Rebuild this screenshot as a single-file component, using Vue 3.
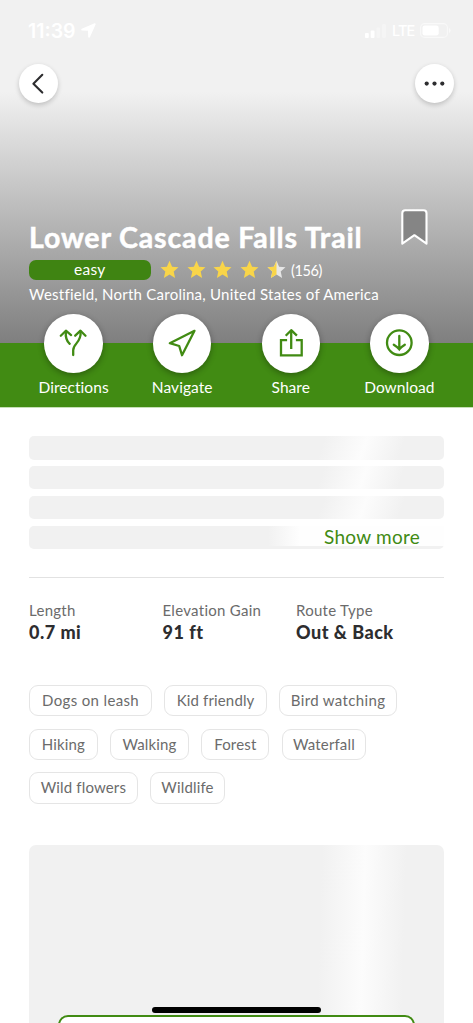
<script setup>
const actions = [
  { id: 'directions', label: 'Directions' },
  { id: 'navigate', label: 'Navigate' },
  { id: 'share', label: 'Share' },
  { id: 'download', label: 'Download' },
]
const stats = [
  { label: 'Length', value: '0.7 mi' },
  { label: 'Elevation Gain', value: '91 ft' },
  { label: 'Route Type', value: 'Out & Back' },
]
const tagRows = [
  [{ t: 'Dogs on leash', w: 123.2 }, { t: 'Kid friendly', w: 102.2 }, { t: 'Bird watching', w: 118.2 }],
  [{ t: 'Hiking', w: 68.8 }, { t: 'Walking', w: 78.8 }, { t: 'Forest', w: 68.3 }, { t: 'Waterfall', w: 84.3 }],
  [{ t: 'Wild flowers', w: 108.8 }, { t: 'Wildlife', w: 74.8 }],
]
const star = 'M9.5 .8 L12.1 6.7 L18.5 7.3 L13.7 11.6 L15.1 17.9 L9.5 14.6 L3.9 17.9 L5.3 11.6 L.5 7.3 L6.9 6.7 Z'
</script>

<template>
  <div class="screen">
    <header class="hero">
      <div class="status">
        <span class="time">11:39</span>
        <svg class="loc" width="15" height="15" viewBox="0 0 15 15"><path d="M13.6.3 .8 5.8C-.2 6.3 0 7.6 1.1 7.6L7 7.7 7.2 13.7c0 1.1 1.3 1.4 1.8.3L14.6 1.4c.3-.8-.3-1.4-1-1.1Z" fill="#fff" /></svg>
        <svg class="signal" width="21" height="14" viewBox="0 0 21 14" fill="#fff">
          <rect x="0" y="9" width="3.8" height="5" rx="1" /><rect x="5.7" y="6.5" width="3.8" height="7.5" rx="1" />
          <rect x="11.4" y="3.5" width="3.8" height="10.5" rx="1" opacity=".3" /><rect x="17.1" y="0" width="3.8" height="14" rx="1" opacity=".3" />
        </svg>
        <span class="lte">LTE</span>
        <svg class="battery" width="31" height="15" viewBox="0 0 31 15">
          <rect x=".6" y=".6" width="26.8" height="13.8" rx="4" fill="none" stroke="#fff" stroke-width="1.1" opacity=".55" />
          <rect x="2.5" y="2.4" width="16.2" height="10.2" rx="2.4" fill="#fff" /><path d="M29 5v5q1.6-.8 1.6-2.5T29 5Z" fill="#fff" opacity=".6" />
        </svg>
      </div>
      <nav class="nav">
        <button class="round"><svg width="39" height="39" viewBox="0 0 39 39"><path d="M23.3 10.8 14.4 19.7 23.3 28.6" fill="none" stroke="#2d2d2f" stroke-width="2.1" stroke-linecap="round" stroke-linejoin="round" /></svg></button>
        <button class="round"><svg width="39" height="39" viewBox="0 0 39 39" fill="#2d2d2f"><circle cx="11.7" cy="19.6" r="2.1" /><circle cx="19.5" cy="19.6" r="2.1" /><circle cx="27.3" cy="19.6" r="2.1" /></svg></button>
      </nav>
      <div class="headline">
        <h1>Lower Cascade Falls Trail</h1>
        <svg class="bookmark" width="27" height="37" viewBox="0 0 27 37"><path d="M1.3 34.7V4.2Q1.3 1.3 4.2 1.3H22.6Q25.5 1.3 25.5 4.2V34.7L13.4 26.2Z" fill="#858585" stroke="#fff" stroke-width="2.1" stroke-linejoin="round" /></svg>
      </div>
      <div class="rating">
        <span class="badge">easy</span>
        <div class="stars">
          <svg v-for="n in 5" :key="n" width="19" height="19" viewBox="0 0 19 19">
            <path :d="star" :fill="n === 5 ? '#e6e6e6' : '#f9d549'" />
            <path v-if="n === 5" d="M9.5 .8V14.6L3.9 17.9 5.3 11.6 .5 7.3 6.9 6.7Z" fill="#f9d549" />
          </svg>
        </div>
        <span class="count">(156)</span>
      </div>
      <p class="place">Westfield, North Carolina, United States of America</p>
    </header>

    <section class="actions">
      <div v-for="a in actions" :key="a.id" class="action">
        <span class="disc">
          <svg width="58" height="58" viewBox="0 0 58 58" fill="none" stroke="#418b13" stroke-width="2.3">
            <g v-if="a.id === 'directions'" stroke-linecap="round">
              <path d="M16.8 21.7 21.9 16.7 27.1 21.1M31.2 21.7 36.5 16.7 41.5 21.7" stroke-linejoin="round" />
              <path d="M21.9 17.5C21.3 23 22.5 27 25.7 29.8M36.5 17.5C37.8 28.5 29.2 29.2 29.2 36.2V41" />
            </g>
            <path v-else-if="a.id === 'navigate'" d="M41.5 16.8 16.8 29.2 26.2 32 29 41.2Z" stroke-linejoin="round" />
            <g v-else-if="a.id === 'share'"><path d="M25.1 26.1H19V41.4H39.7V26.1H33.9M29.2 35V16.2" /><path d="M23.7 21.7 29.2 16.2 34.9 21.7" stroke-linejoin="round" /></g>
            <g v-else><circle cx="29.3" cy="28.7" r="12.3" /><path d="M29.3 22V35M23.8 30.7Q27.5 33 29.3 35.3 31.1 33 34.8 30.7" stroke-linecap="round" /></g>
          </svg>
        </span>
        <span class="alabel">{{ a.label }}</span>
      </div>
    </section>

    <main>
      <div class="lines">
        <div class="line"></div><div class="line"></div><div class="line"></div>
        <div class="line last"><a class="more">Show more</a></div>
      </div>
      <hr />
      <dl class="stats">
        <div v-for="s in stats" :key="s.label"><dt>{{ s.label }}</dt><dd>{{ s.value }}</dd></div>
      </dl>
      <div class="tags">
        <div v-for="(row, i) in tagRows" :key="i" class="tagrow">
          <span v-for="tag in row" :key="tag.t" class="tag" :style="{ width: tag.w + 'px' }">{{ tag.t }}</span>
        </div>
      </div>
      <div class="map"><div class="cta"></div><div class="home"></div></div>
    </main>
  </div>
</template>

<style>
body { margin: 0; background: #fff; }
</style>
<style scoped>
* { box-sizing: border-box; }
.screen { width: 473px; height: 1023px; overflow: hidden; background: #fff; font-family: Lato, "Liberation Sans", sans-serif; color: #2d2d2f; }
.hero { height: 343px; background: linear-gradient(#f1f1f1 92px, #7f7f7f 343px); color: #fff; }
.status { height: 64px; padding: 0 22px 3px 28px; display: flex; align-items: center; }
.time { font: 600 19.5px/24px Inter, sans-serif; width: 49px; letter-spacing: 0; }
.loc { margin-left: 4px; }
.signal { margin-left: auto; }
.lte { font: 500 14.5px/20px Inter, sans-serif; margin: 0 5px 0 6px; width: 23px; letter-spacing: -.9px; }
.nav { display: flex; justify-content: space-between; padding: 0 19px 0 19.4px; }
.round { width: 39px; height: 39px; padding: 0; border: 0; border-radius: 50%; background: #fff; box-shadow: 0 2px 5px rgba(0,0,0,.2); }
.round svg, .disc svg { display: block; }
.headline { margin-top: 105px; padding: 0 45px 0 29px; display: flex; justify-content: space-between; height: 52.5px; }
.bookmark { margin-top: .7px; }
h1 { margin: 12px 0 0; font-size: 28.5px; line-height: 34px; font-weight: 700; letter-spacing: .85px; white-space: nowrap; -webkit-text-stroke: .5px #fff; }
.rating { display: flex; align-items: center; height: 19px; padding-left: 29px; }
.badge { width: 121.5px; height: 19.5px; border-radius: 7px; background: #3f8412; text-align: center; font-size: 15.5px; line-height: 18px; letter-spacing: .3px; }
.stars { display: flex; gap: 7.8px; margin: -1px 0 0 9.3px; }
.count { font-size: 14.5px; margin-left: 4.9px; line-height: 19px; letter-spacing: -.35px; }
.place { margin: 4.5px 0 0 29px; font-size: 15px; line-height: 20px; letter-spacing: .24px; white-space: nowrap; }
.actions { height: 64px; background: #418b13; padding: 0 19.3px; display: flex; box-shadow: 0 1px 0 #c6dfb6; }
.action { width: 108.6px; display: flex; flex-direction: column; align-items: center; margin-top: -29px; }
.disc { width: 58.5px; height: 58.5px; border-radius: 50%; background: #fff; box-shadow: 0 2px 6px rgba(0,0,0,.32); }
.alabel { color: #fff; font-size: 15.5px; line-height: 20px; margin-top: 4px; letter-spacing: .05px; }
main { padding: 29.3px 29px 0; }
.lines { display: grid; gap: 6.5px; }
.line { height: 23.3px; border-radius: 5px; background: linear-gradient(110deg, #f1f1f1 70%, #fcfcfc 80%, #f1f1f1 89%); }
.last { position: relative; background: #f1f1f1; }
.more { position: absolute; right: 0; top: 0; width: 176px; height: 20.5px; padding-left: 56px; background: linear-gradient(90deg, #f1f1f1, #fefefe 32px); color: #418b13; font-size: 19px; line-height: 21px; letter-spacing: .26px; }
hr { height: 1px; margin: 28.2px 0 0; border: 0; background: #e2e2e2; }
.stats { margin: 21.5px 0 0; display: grid; grid-template-columns: repeat(3, 133.5px); }
dt { color: #6b6b6b; font-size: 15px; line-height: 20px; letter-spacing: .28px; white-space: nowrap; }
dd { margin: 0; font-size: 18px; line-height: 24px; font-weight: 900; letter-spacing: .5px; }
.tags { margin-top: 41.2px; display: grid; gap: 12.2px; }
.tagrow { display: flex; gap: 12.3px; }
.tag { height: 31.5px; border: 1.4px solid #e5e5e5; border-radius: 9px; text-align: center; color: #6b6b6b; font-size: 15px; line-height: 29px; letter-spacing: .35px; white-space: nowrap; }
.tagrow:nth-child(n + 2) .tag, .tag:nth-child(2) { letter-spacing: .15px; }
.map { position: relative; margin-top: 41.3px; height: 250px; border-radius: 7px; background: linear-gradient(91.5deg, #f1f1f1 69.5%, #fcfcfc 79.8%, #f1f1f1 89.5%); }
.cta { position: absolute; left: 29px; right: 29px; top: 169.5px; height: 60px; border: 2.5px solid #418b13; border-radius: 10px; background: #fff; }
.home { position: absolute; left: 123px; top: 162.3px; width: 169px; height: 6px; border-radius: 3px; background: #000; }
</style>
